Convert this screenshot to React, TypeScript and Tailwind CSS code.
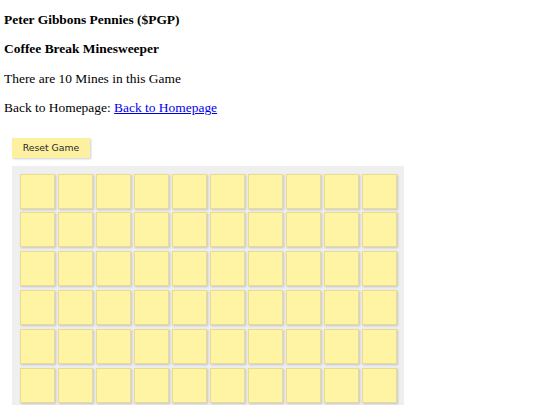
const ROWS = 6;
const COLS = 10;

function Tile() {
  return (
    <div className="h-[35px] w-[35px] border border-[#e9dc92] bg-[#fff3a4] shadow-[1px_1px_2px_rgba(0,0,0,0.18)]" />
  );
}

export default function App() {
  const tiles = Array.from({ length: ROWS * COLS }, (_, i) => i);

  return (
    <div className="h-[405px] overflow-hidden bg-white font-['Liberation_Serif',serif] text-[13.45px] leading-[15.5px] text-black">
      <div className="pl-[4px] pt-[12px]">
        <h4 className="font-bold">Peter Gibbons Pennies ($PGP)</h4>
        <h4 className="mt-[13.8px] font-bold">Coffee Break Minesweeper</h4>
        <p className="mt-[13.8px]">There are 10 Mines in this Game</p>
        <p className="mt-[13.6px]">
          Back to Homepage:{" "}
          <a href="#" className="text-[#0000ee] underline">
            Back to Homepage
          </a>
        </p>
      </div>

      <div className="pl-[12px] pt-[22.5px]">
        <button
          type="button"
          className="h-[20px] w-[78px] bg-[#fdf0a0] font-['DejaVu_Sans',sans-serif] text-[9.3px] text-[#2a2a2a] shadow-[1px_1px_2px_rgba(0,0,0,0.2)]"
        >
          Reset Game
        </button>
      </div>

      <div className="ml-[12px] mt-[8.5px] w-[392px] bg-[#efefef] pl-[8px] pt-[7.5px] pb-[8px]">
        <div className="grid grid-cols-[repeat(10,35px)] gap-x-[3px] gap-y-[3.8px]">
          {tiles.map((i) => (
            <Tile key={i} />
          ))}
        </div>
      </div>
    </div>
  );
}
